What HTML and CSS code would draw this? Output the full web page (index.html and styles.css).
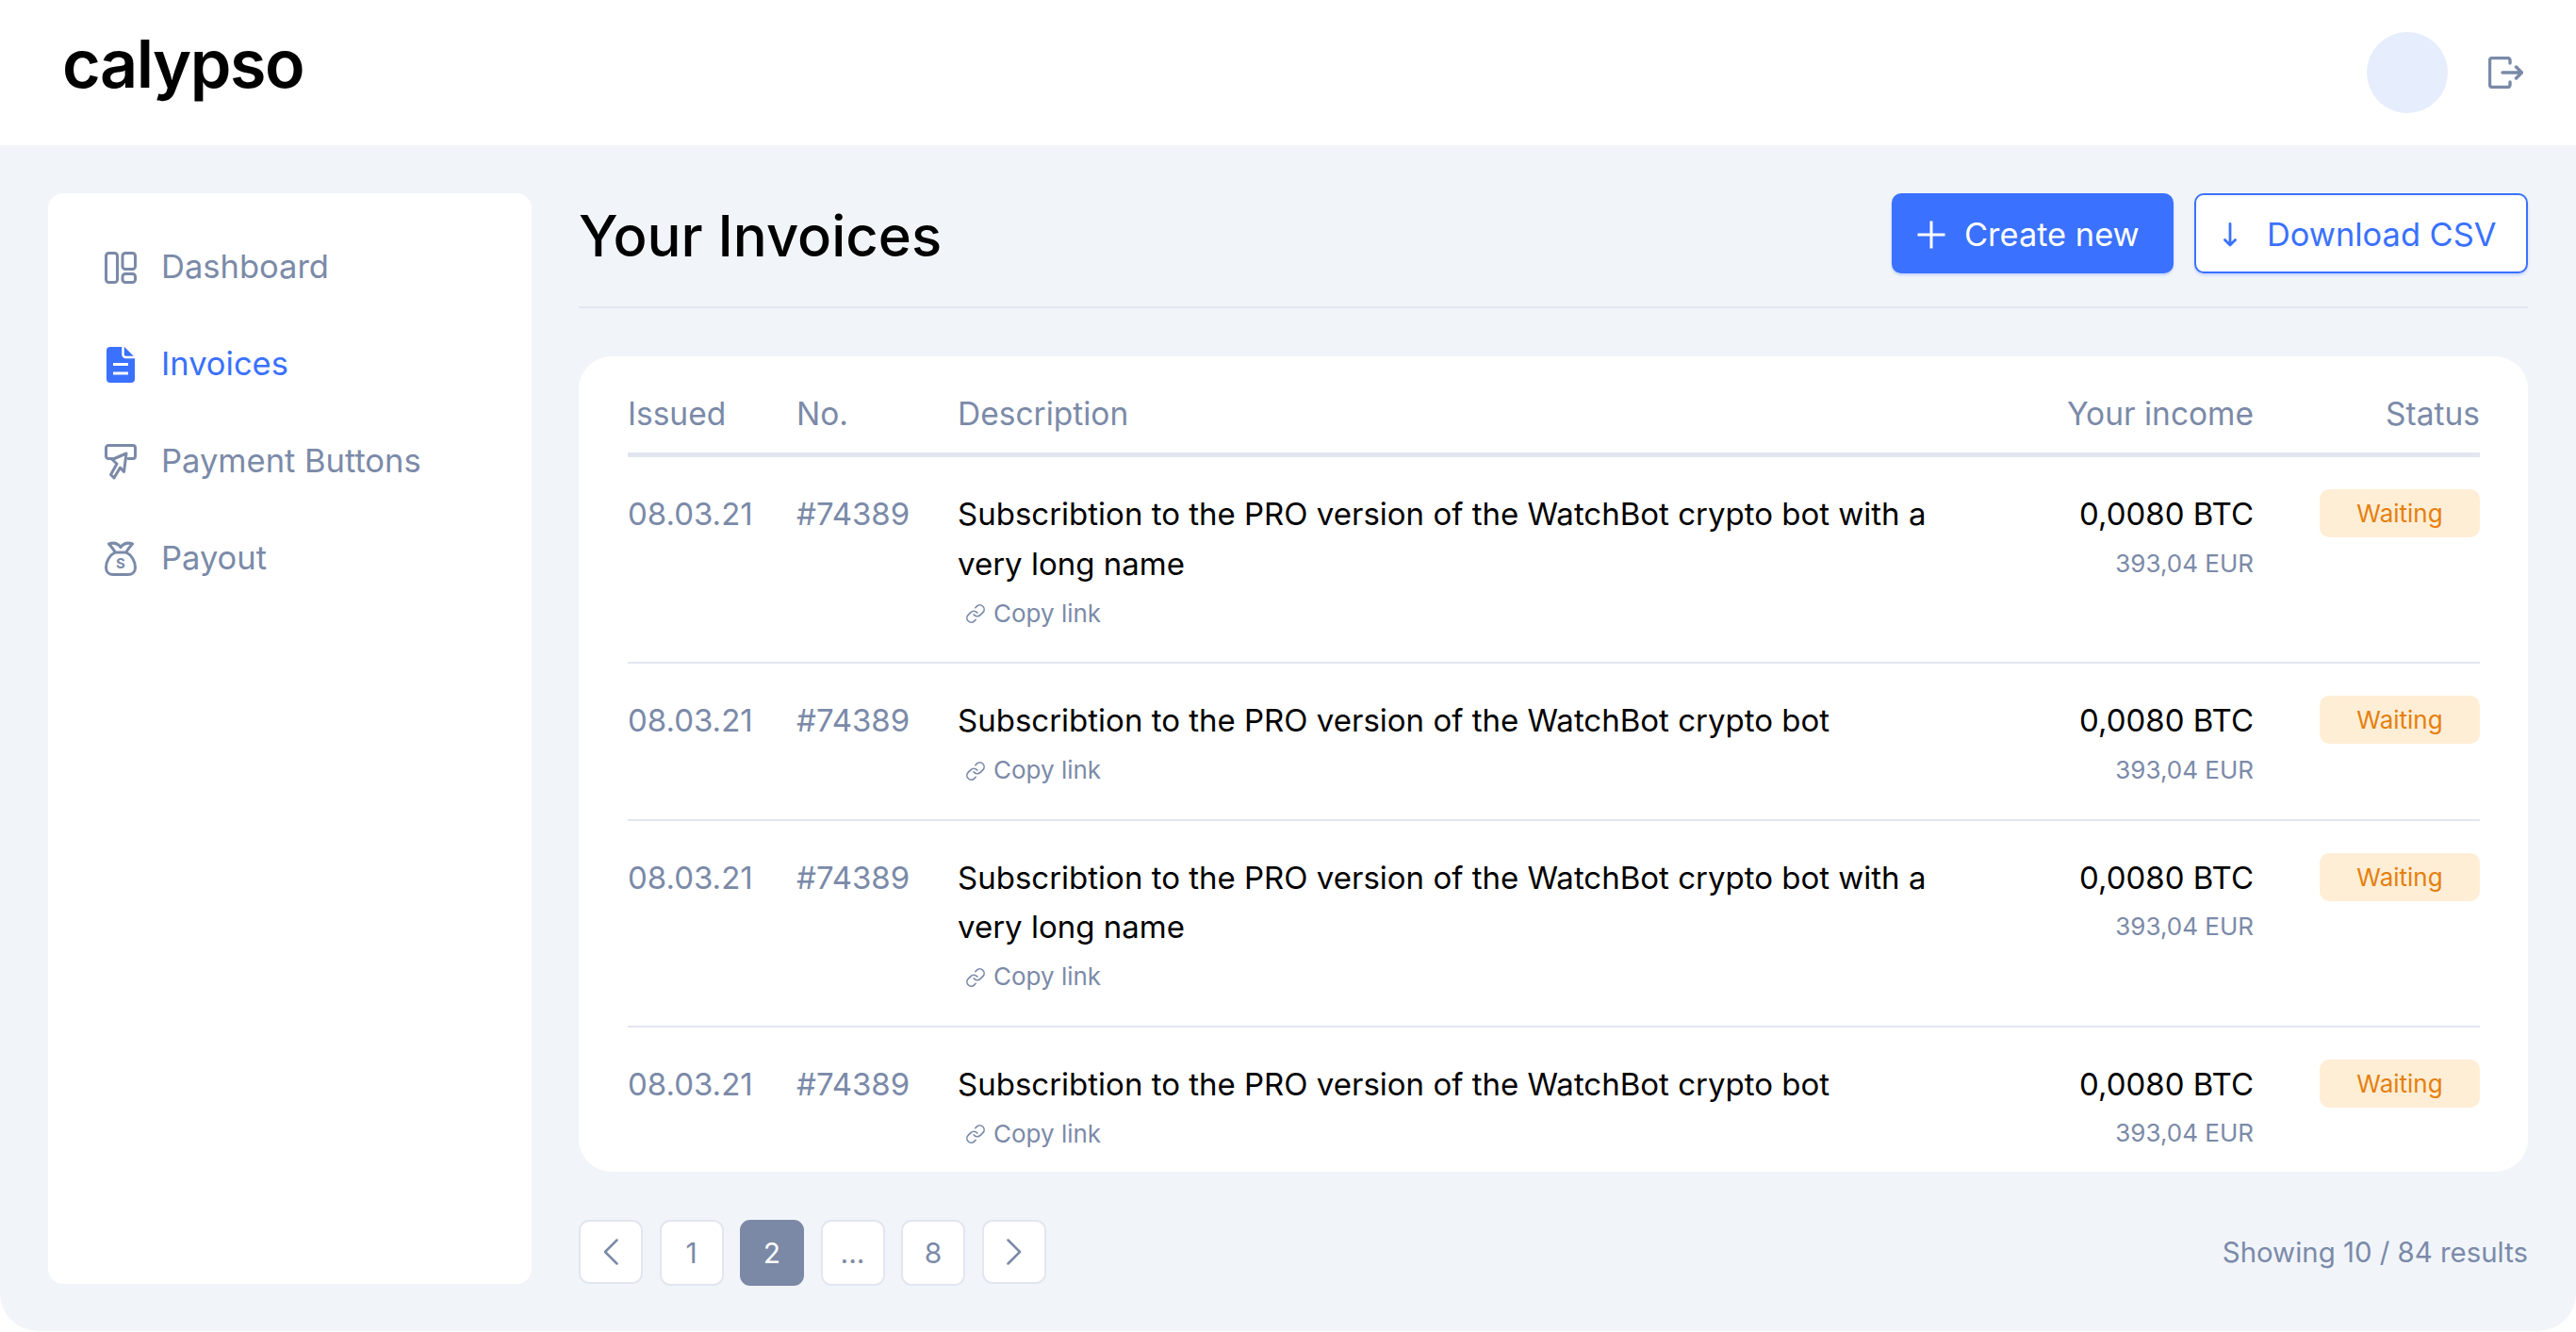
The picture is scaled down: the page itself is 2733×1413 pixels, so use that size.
FILE: index.html
```html
<!DOCTYPE html>
<html lang="en">
<head>
<meta charset="utf-8">
<title>Calypso - Your Invoices</title>
<link rel="stylesheet" href="styles.css">
</head>
<body>
<header class="topbar">
  <div class="logo">calypso</div>
  <div class="topbar-right">
    <div class="avatar"></div>
    <svg class="logout" viewBox="0 0 37 34" fill="none" stroke="#7b8aa8" stroke-width="3.400" stroke-linecap="round" stroke-linejoin="round"><path d="M23 7V4a2.5 2.5 0 0 0-2.5-2.5H4A2.5 2.5 0 0 0 1.5 4v26A2.5 2.5 0 0 0 4 32.500h16.500A2.500 2.500 0 0 0 23 30v-3"/><path d="M15 17h20M29.500 11l6 6-6 6"/></svg>
  </div>
</header>
<main class="main">
  <nav class="sidebar">
    <a class="nav-item"><span class="nav-icon"><svg width="34" height="34" viewBox="0 0 34 34" fill="none" stroke="#7b8aa8" stroke-width="3"><rect x="1.500" y="1.500" width="12" height="31" rx="3"/><rect x="19" y="1.500" width="13.500" height="17" rx="3"/><rect x="19" y="23.500" width="13.500" height="9" rx="3"/></svg></span>Dashboard</a>
    <a class="nav-item active"><span class="nav-icon"><svg class="doc" width="30" height="38" viewBox="0 0 30 38"><path d="M4 0H19L30 11V34a4 4 0 0 1-4 4H4a4 4 0 0 1-4-4V4a4 4 0 0 1 4-4z" fill="#3a71ff"/><path d="M17.500 0V8a3 3 0 0 0 3 3H30" fill="none" stroke="#fff" stroke-width="2.500"/><path d="M7 18.500H23M7 28H23" fill="none" stroke="#fff" stroke-width="3.200"/></svg></span>Invoices</a>
    <a class="nav-item"><span class="nav-icon"><svg width="34" height="38" viewBox="0 0 34 38" fill="none" stroke="#7b8aa8" stroke-width="3" stroke-linejoin="round" stroke-linecap="round"><path d="M8 15.500H4A2.500 2.500 0 0 1 1.500 13V4A2.500 2.500 0 0 1 4 1.500H30A2.500 2.500 0 0 1 32.500 4V13A2.500 2.500 0 0 1 30 15.500H25"/><path d="M23 10L8 16.500L13 21L6.500 32.500L10 36L16.500 25L20.500 29.500Z"/></svg></span>Payment Buttons</a>
    <a class="nav-item"><span class="nav-icon"><svg width="34" height="37" viewBox="0 0 34 37" fill="none" stroke="#7b8aa8" stroke-width="3" stroke-linejoin="round" stroke-linecap="round"><path d="M11 12C5 15 1.500 22 1.500 28C1.500 33 5 35.500 9 35.500H25C29 35.500 32.500 33 32.500 28C32.500 22 29 15 23 12Z"/><path d="M11 12C10 9 7 6 4.500 3C8.500 1.500 13.500 2 17 6.500C20.500 2 25.500 1.500 29.500 3C27 6 24 9 23 12"/><text class="bag-s" x="17" y="29" text-anchor="middle">S</text></svg></span>Payout</a>
  </nav>
  <section class="content">
    <div class="page-head">
      <h1 class="page-title">Your Invoices</h1>
      <div class="actions">
        <button class="btn btn-primary"><svg width="30" height="30" viewBox="0 0 30 30" stroke="#fff" stroke-width="3"><path d="M15 0.500V29.500M0.500 15H29.500"/></svg>Create new</button>
        <button class="btn btn-outline"><svg width="14" height="26" viewBox="0 0 14 26" fill="none" stroke="#3a71ff" stroke-width="2.800" stroke-linecap="round" stroke-linejoin="round"><path d="M7 1.500V24M1.500 18.500L7 24L12.500 18.500"/></svg>Download CSV</button>
      </div>
    </div>
    <div class="card">
      <div class="row head">
        <div>Issued</div><div>No.</div><div>Description</div><div class="income">Your income</div><div class="status-head">Status</div>
      </div>
      <div class="row">
        <div class="muted">08.03.21</div><div class="muted">#74389</div>
        <div><div>Subscribtion to the PRO version of the WatchBot crypto bot with a very long name</div><a class="copy"><svg width="22" height="22" viewBox="0 0 24 24" fill="none" stroke="#7b8aa8" stroke-width="1.800" stroke-linecap="round" stroke-linejoin="round"><path d="M10 13a5 5 0 0 0 7.540.540l3-3a5 5 0 0 0-7.070-7.070l-1.720 1.710"/><path d="M14 11a5 5 0 0 0-7.540-.540l-3 3a5 5 0 0 0 7.070 7.070l1.710-1.710"/></svg>Copy link</a></div>
        <div class="income"><div>0,0080 BTC</div><div class="fiat">393,04 EUR</div></div>
        <div class="badge">Waiting</div>
      </div>
      <div class="row">
        <div class="muted">08.03.21</div><div class="muted">#74389</div>
        <div><div>Subscribtion to the PRO version of the WatchBot crypto bot</div><a class="copy"><svg width="22" height="22" viewBox="0 0 24 24" fill="none" stroke="#7b8aa8" stroke-width="1.800" stroke-linecap="round" stroke-linejoin="round"><path d="M10 13a5 5 0 0 0 7.540.540l3-3a5 5 0 0 0-7.070-7.070l-1.720 1.710"/><path d="M14 11a5 5 0 0 0-7.540-.540l-3 3a5 5 0 0 0 7.070 7.070l1.710-1.710"/></svg>Copy link</a></div>
        <div class="income"><div>0,0080 BTC</div><div class="fiat">393,04 EUR</div></div>
        <div class="badge">Waiting</div>
      </div>
      <div class="row">
        <div class="muted">08.03.21</div><div class="muted">#74389</div>
        <div><div>Subscribtion to the PRO version of the WatchBot crypto bot with a very long name</div><a class="copy"><svg width="22" height="22" viewBox="0 0 24 24" fill="none" stroke="#7b8aa8" stroke-width="1.800" stroke-linecap="round" stroke-linejoin="round"><path d="M10 13a5 5 0 0 0 7.540.540l3-3a5 5 0 0 0-7.070-7.070l-1.720 1.710"/><path d="M14 11a5 5 0 0 0-7.540-.540l-3 3a5 5 0 0 0 7.070 7.070l1.710-1.710"/></svg>Copy link</a></div>
        <div class="income"><div>0,0080 BTC</div><div class="fiat">393,04 EUR</div></div>
        <div class="badge">Waiting</div>
      </div>
      <div class="row">
        <div class="muted">08.03.21</div><div class="muted">#74389</div>
        <div><div>Subscribtion to the PRO version of the WatchBot crypto bot</div><a class="copy"><svg width="22" height="22" viewBox="0 0 24 24" fill="none" stroke="#7b8aa8" stroke-width="1.800" stroke-linecap="round" stroke-linejoin="round"><path d="M10 13a5 5 0 0 0 7.540.540l3-3a5 5 0 0 0-7.070-7.070l-1.720 1.710"/><path d="M14 11a5 5 0 0 0-7.540-.540l-3 3a5 5 0 0 0 7.070 7.070l1.710-1.710"/></svg>Copy link</a></div>
        <div class="income"><div>0,0080 BTC</div><div class="fiat">393,04 EUR</div></div>
        <div class="badge">Waiting</div>
      </div>
    </div>
    <div class="foot">
      <div class="pager">
        <a class="page arrow"><svg width="16" height="28" viewBox="0 0 16 28" fill="none" stroke="#7b8aa8" stroke-width="2.500" stroke-linecap="round" stroke-linejoin="round"><path d="M14.500 1.500L2 14L14.500 26.500"/></svg></a>
        <a class="page">1</a>
        <a class="page current">2</a>
        <a class="page">...</a>
        <a class="page">8</a>
        <a class="page arrow"><svg width="16" height="28" viewBox="0 0 16 28" fill="none" stroke="#7b8aa8" stroke-width="2.500" stroke-linecap="round" stroke-linejoin="round"><path d="M1.500 1.500L14 14L1.500 26.500"/></svg></a>
      </div>
      <div class="results">Showing 10 / 84 results</div>
    </div>
  </section>
</main>
</body>
</html>
```
FILE: styles.css
```css
* { box-sizing: border-box; }
html, body { margin: 0; padding: 0; height: 100%; background: #fff; overflow: hidden; }
body { font-family: Inter, "Liberation Sans", sans-serif; color: #000; font-size: 33px; line-height: 52.5px; }

.topbar { height: 154px; display: flex; align-items: center; justify-content: space-between; padding: 0 56px 0 66px; }
.logo { font-size: 70px; font-weight: 600; line-height: 1; letter-spacing: -1.500px; margin-top: -18px; }
.topbar-right { display: flex; align-items: center; gap: 43px; }
.avatar { width: 86px; height: 86px; border-radius: 50%; background: #e6edfd; }
.logout { width: 37px; height: 34px; }

.main { height: 1258px; background: #f1f5fa; border-radius: 0 0 40px 40px; padding: 51px; display: flex; gap: 50px; }
.sidebar { width: 513px; height: 1157px; flex: none; background: #fff; border-radius: 16px; padding: 27px 0 0 60px; display: flex; flex-direction: column; }
.nav-item { height: 103px; display: flex; align-items: center; color: #7b8aa8; font-size: 34.500px; }
.nav-item.active { color: #3a71ff; }
.nav-icon { width: 60px; flex: none; display: flex; align-items: center; }
.doc { margin-left: 2px; }
.bag-s { font-family: Inter, sans-serif; font-size: 15px; font-weight: 700; fill: #7b8aa8; stroke: none; }

.content { flex: 1; min-width: 0; display: flex; flex-direction: column; }
.page-head { height: 122px; flex: none; display: flex; justify-content: space-between; align-items: flex-start; border-bottom: 2px solid #e2e6f0; }
.page-title { margin: 3px 0 0; font-size: 59.800px; font-weight: 500; line-height: 85px; }
.actions { display: flex; gap: 22px; }
.btn { height: 85px; border-radius: 10px; display: flex; align-items: center; padding-top: 1px; font: 400 34.400px Inter, sans-serif; cursor: pointer; }
.btn-primary { width: 299px; background: #3a71ff; color: #fff; border: 0; padding: 2px 0 0 27px; gap: 20px; box-shadow: 0 2px 3px rgba(58,113,255,.25); }
.btn-outline { width: 354px; background: #fff; color: #3a71ff; border: 2px solid #3a71ff; padding: 2px 0 0 29px; gap: 32px; box-shadow: 0 2px 3px rgba(58,113,255,.25); }

.card { height: 865px; flex: none; margin-top: 51px; background: #fff; border-radius: 35px; padding: 0 51px 0 52px; overflow: hidden; }
.row { display: grid; grid-template-columns: 179px 171px 1080px 1fr 170px; padding: 34px 0 24px; border-bottom: 2px solid #e2e6f0; }
.row:last-child { border-bottom: 0; }
.row.head { height: 107px; padding: 35px 0 0; color: #7b8aa8; font-size: 33.500px; border-bottom: 5px solid #e2e6f0; }
.status-head { text-align: right; }
.income { text-align: right; padding-right: 70px; }
.muted { color: #7b8aa8; }
.copy { display: flex; align-items: center; gap: 8px; height: 54px; padding-left: 8px; color: #7b8aa8; font-size: 26px; }
.fiat { color: #7b8aa8; font-size: 26px; line-height: 52px; }
.badge { height: 51px; border-radius: 10px; background: #ffeed6; color: #e5800e; font-size: 26px; line-height: 51px; text-align: center; }

.foot { margin-top: 51px; display: flex; justify-content: space-between; align-items: flex-start; }
.pager { display: flex; gap: 17.500px; align-items: flex-start; }
.page { width: 68px; height: 70px; border: 2px solid #e2e6f0; border-radius: 11px; background: #fff; color: #7b8aa8; font-size: 30px; display: flex; align-items: center; justify-content: center; }
.page.arrow { height: 68px; }
.page.current { background: #7b89a6; border-color: #7b89a6; color: #fff; }
.results { color: #7b8aa8; font-size: 29.400px; line-height: 70px; }
```
